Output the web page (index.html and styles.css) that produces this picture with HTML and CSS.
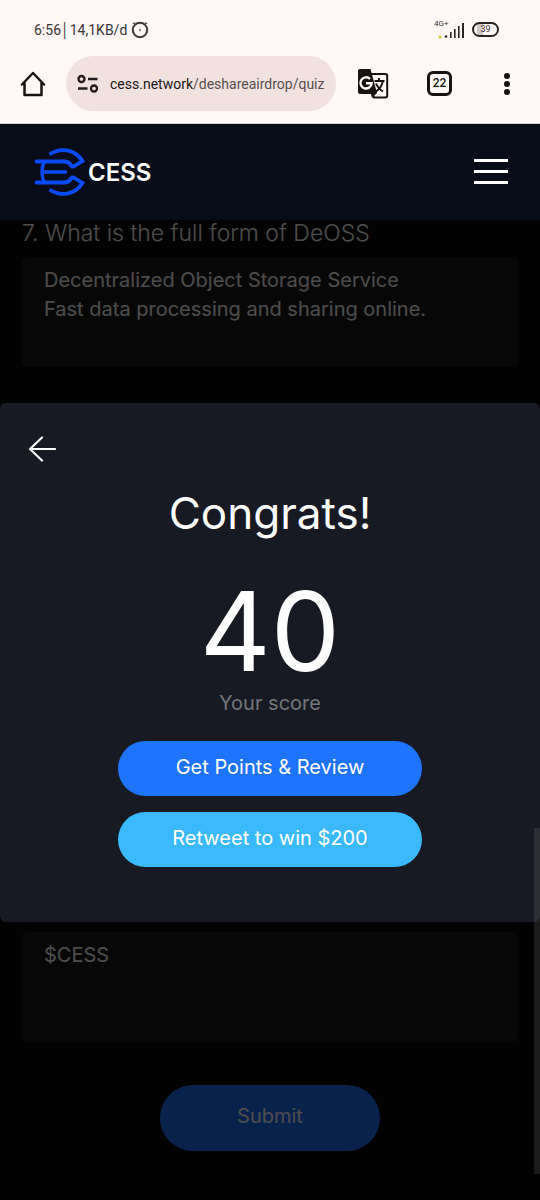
FILE: index.html
```html
<!DOCTYPE html>
<html lang="en">
<head>
<meta charset="utf-8">
<meta name="viewport" content="width=device-width, initial-scale=1">
<title>CESS</title>
<link rel="stylesheet" href="styles.css">
</head>
<body>
<div class="screen">
  <div class="status">
    <div class="status-group">
      <span class="status-time">6:56│14,1KB/d</span>
      <svg width="18" height="20" viewBox="0 0 18 20" fill="none" stroke="#3b3434" stroke-width="2"><circle cx="9" cy="10" r="7.2"/><path d="M2 3.600 4 2.800M16 3.600 14 2.800" stroke-width="1.200"/><circle cx="9" cy="10" r="1.200" fill="#8a8080" stroke="none"/></svg>
    </div>
    <div class="status-group">
      <span class="network">
        <span class="network-type">4G+</span>
        <svg width="29" height="18" viewBox="0 0 29 18"><circle cx="4" cy="16" r="1.500" fill="#d8bd2c"/><g fill="#2a2424"><circle cx="10" cy="15.500" r="1.300"/><rect x="14" y="11" width="1.600" height="6"/><rect x="18" y="8" width="1.600" height="9"/><rect x="22" y="5" width="1.600" height="12"/><rect x="26" y="2" width="2" height="15"/></g></svg>
      </span>
      <span class="battery">39</span>
    </div>
  </div>

  <div class="toolbar">
    <button class="icon-button" aria-label="Home">
      <svg width="26" height="28" viewBox="0 0 26 28" fill="none" stroke="#181212" stroke-width="2.500" stroke-linejoin="round" stroke-linecap="round"><path d="M2 14.500 13 3l11 11.500M4.500 13v12h17V13"/></svg>
    </button>
    <div class="address">
      <svg width="22" height="20" viewBox="0 0 22 20" fill="none" stroke="#231c1c" stroke-width="2.300"><circle cx="4.500" cy="5" r="3"/><path d="M11 5h9.500M1 14.500h9.500"/><circle cx="17" cy="14.500" r="3"/></svg>
      <div class="url"><span class="host">cess.network</span>/deshareairdrop/quiz</div>
    </div>
    <div class="toolbar-actions">
      <button class="icon-button" aria-label="Translate">
        <svg width="32" height="32" viewBox="0 0 32 32" fill="none"><path d="M14 6h14.500q1.700 0 1.700 1.700v20q0 1.700-1.700 1.700H17l-3-6" stroke="#181212" stroke-width="2"/><path d="M3 1h10.500l6.500 24-5 5-1-4H3q-2 0-2-2V3q0-2 2-2z" fill="#181212"/><path d="M13 11a5.600 5.600 0 1 0 1.600 4.200H9" stroke="#fff8f6" stroke-width="2.400"/><path d="M17.500 13h10M22 10v3M26 13q-2 8-8 11M19 15.500q2 5 7 8" stroke="#181212" stroke-width="1.900"/></svg>
      </button>
      <button class="tabs" aria-label="22 open tabs">22</button>
      <button class="icon-button" aria-label="More">
        <svg width="8" height="24" viewBox="0 0 8 24" fill="#181212"><circle cx="4" cy="4" r="3"/><circle cx="4" cy="12" r="3"/><circle cx="4" cy="20" r="3"/></svg>
      </button>
    </div>
  </div>

  <div class="site">
    <header class="nav">
      <a class="brand" href="#" aria-label="CESS">
        <svg width="52" height="48" viewBox="0 0 52 48" fill="none" stroke="#0a4bff" stroke-width="3.800" stroke-linecap="round" stroke-linejoin="round"><path d="M15.500 6.500C26-1 41 1 48.500 13L38.500 19.200" stroke-linecap="butt" stroke-linejoin="miter"/><path d="M15.500 41.500C26 49 41 47 48.500 35L38.500 28.800" stroke-linecap="butt" stroke-linejoin="miter"/><path d="M2.500 13.500h27.500q4 0 6 2.500l2 2.500M2.500 34.500h27.500q4 0 6-2.500l2-2.500"/><path d="M10 14q-4 10 0 20M10 24h21.500" stroke-width="3.400"/></svg>
        <span class="brand-name">CESS</span>
      </a>
      <button class="icon-button" aria-label="Menu">
        <svg width="34" height="26" viewBox="0 0 34 26" fill="#fff"><rect width="34" height="3"/><rect y="11" width="34" height="3"/><rect y="22" width="34" height="3"/></svg>
      </button>
    </header>

    <form class="quiz">
      <label class="question" for="q7">7. What is the full form of DeOSS</label>
      <textarea class="answer" id="q7">Decentralized Object Storage Service
Fast data processing and sharing online.</textarea>
      <textarea class="answer answer-last" aria-label="Answer">$CESS</textarea>
      <button class="submit" type="button">Submit</button>
    </form>

    <div class="overlay">
      <section class="dialog" role="dialog" aria-labelledby="dialog-title">
        <button class="icon-button back" aria-label="Back">
          <svg width="28" height="28" viewBox="0 0 28 28" fill="none" stroke="#fff" stroke-width="2.200" stroke-linecap="round" stroke-linejoin="round"><path d="M14 2.500 2 14l12 11.500M2 14h25"/></svg>
        </button>
        <h1 class="title" id="dialog-title">Congrats!</h1>
        <p class="score">40</p>
        <p class="caption">Your score</p>
        <div class="actions">
          <button class="action">Get Points &amp; Review</button>
          <button class="action action-light">Retweet to win $200</button>
        </div>
      </section>
    </div>
    <div class="scroll-thumb"></div>
  </div>
</div>
</body>
</html>
```
FILE: styles.css
```css
* { box-sizing: border-box; }

body {
  margin: 0;
  background: #fff8f6;
  font-family: Inter, "Noto Sans", sans-serif;
}

button {
  border: 0;
  padding: 0;
  font: inherit;
  cursor: pointer;
}

h1, p { margin: 0; font-weight: 400; }

svg { display: block; flex: none; }

.screen {
  display: flex;
  flex-direction: column;
  min-height: 100vh;
}

.icon-button { background: none; }

/* Phone status bar */
.status {
  display: flex;
  justify-content: space-between;
  align-items: center;
  height: 56px;
  padding: 3px 41px 0 34px;
  color: #3b3434;
  font-family: Roboto, sans-serif;
}

.status-group { display: flex; align-items: center; gap: 4px; }
.status-time { font-size: 14px; }
.network { position: relative; margin-right: 3px; }
.network-type { position: absolute; left: -2px; top: -2px; font-size: 8px; line-height: 10px; }

.battery {
  width: 27px;
  height: 15px;
  border: 2px solid #2a2424;
  border-radius: 8px;
  background: linear-gradient(90deg, #fff8f6 3px, #cfc7c6 3px 9px, #fff8f6 9px);
  font-size: 9px;
  line-height: 11px;
  text-align: center;
}

/* Browser toolbar */
.toolbar {
  display: flex;
  align-items: center;
  height: 68px;
  padding: 0 0 12px 20px;
  border-bottom: 1px solid #d8cccc;
}

.address {
  display: flex;
  align-items: center;
  gap: 11px;
  flex: 1;
  min-width: 0;
  height: 55px;
  margin: 0 3px 0 20px;
  padding: 0 10px 0 11px;
  border-radius: 28px;
  background: #f1e2e0;
}

.url {
  overflow: hidden;
  white-space: nowrap;
  color: #594e4e;
  font-family: Roboto, sans-serif;
  font-size: 14px;
  line-height: 24px;
}

.host { color: #1d1717; }

.toolbar-actions {
  display: grid;
  grid-template-columns: repeat(3, 67px);
  place-items: center;
}

.tabs {
  width: 25px;
  height: 25px;
  border: 3px solid #181212;
  border-radius: 6px;
  background: none;
  color: #181212;
  font: 500 12px/19px Roboto, sans-serif;
}

/* Website */
.site {
  position: relative;
  display: flex;
  flex: 1;
  flex-direction: column;
  background: #070908;
}

.nav {
  position: relative;
  z-index: 2;
  display: flex;
  align-items: center;
  justify-content: space-between;
  height: 96px;
  padding: 0 32px 0 34px;
  background: #080c18;
}

.brand { display: flex; align-items: center; gap: 2px; color: #fff; text-decoration: none; }
.brand-name { font-size: 24px; font-weight: 600; }

.quiz {
  display: flex;
  flex: 1;
  flex-direction: column;
  padding: 0 22px 49px;
}

.question {
  margin-bottom: 11px;
  color: #fff;
  font-size: 23px;
  line-height: 26px;
  font-weight: 300;
}

.answer {
  width: 100%;
  height: 110px;
  padding: 9px 22px;
  border: 0;
  border-radius: 6px;
  background: linear-gradient(#999, #999) right bottom / 2px 2px no-repeat #1b1a1a;
  color: #fff;
  font-family: inherit;
  font-size: 20px;
  line-height: 29px;
  resize: none;
}

.answer-last { margin-top: auto; }

.submit {
  align-self: center;
  width: 220px;
  height: 66px;
  margin-top: 43px;
  padding-bottom: 4px;
  border-radius: 33px;
  background: #1e73ff;
  color: #fff;
  font-size: 20px;
}

/* Result dialog */
.overlay {
  position: absolute;
  inset: 0;
  z-index: 1;
  display: flex;
  align-items: center;
  background: rgba(0, 0, 0, 0.7);
}

.dialog {
  display: flex;
  flex-direction: column;
  align-items: center;
  width: 100%;
  padding: 32px 28px 55px;
  border-radius: 6px;
  background: #171a23;
  color: #fff;
  text-align: center;
}

.back { align-self: flex-start; }
.title { margin-top: 20px; font-size: 44px; line-height: 60px; }
.score { margin-top: 28px; font-size: 110px; line-height: 120px; }
.caption { color: #74767b; font-size: 20px; line-height: 24px; }

.actions {
  display: grid;
  gap: 16px;
  width: 304px;
  max-width: 100%;
  margin-top: 26px;
}

.action {
  height: 55px;
  padding-bottom: 3px;
  border-radius: 28px;
  background: #1e73ff;
  color: #fff;
  font-size: 20px;
}

.action-light { background: #3bb9ff; }

.scroll-thumb {
  position: absolute;
  right: 0;
  bottom: 26px;
  z-index: 3;
  width: 6px;
  height: 346px;
  background: rgba(128, 128, 128, 0.2);
}
```
